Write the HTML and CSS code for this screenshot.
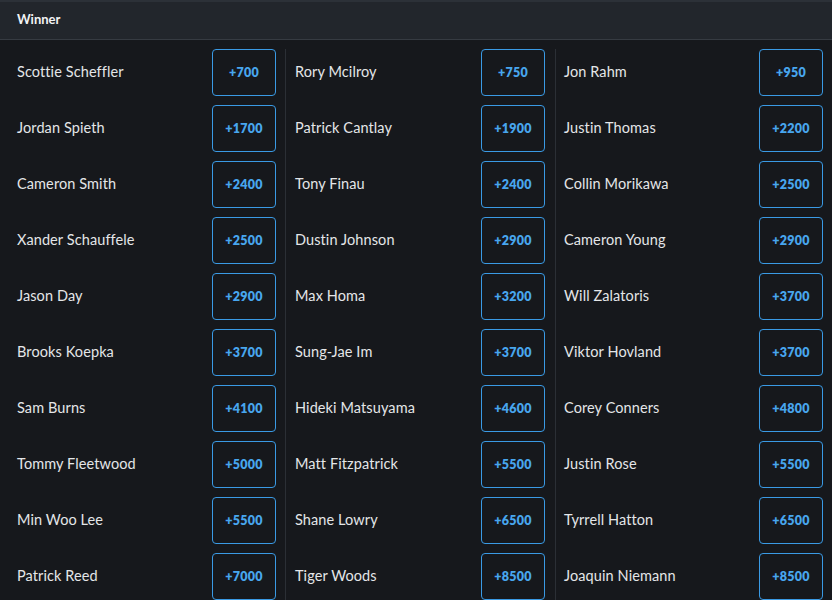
FILE: index.html
```html
<!DOCTYPE html>
<html>
<head>
<meta charset="utf-8">
<link rel="stylesheet" href="styles.css">
</head>
<body>
<div class="market">
  <div class="market-header">Winner</div>
  <div class="grid">
    <div class="col col-1">
      <div class="row"><span class="name">Scottie Scheffler</span><button class="odds">+700</button></div>
      <div class="row"><span class="name">Jordan Spieth</span><button class="odds">+1700</button></div>
      <div class="row"><span class="name">Cameron Smith</span><button class="odds">+2400</button></div>
      <div class="row"><span class="name">Xander Schauffele</span><button class="odds">+2500</button></div>
      <div class="row"><span class="name">Jason Day</span><button class="odds">+2900</button></div>
      <div class="row"><span class="name">Brooks Koepka</span><button class="odds">+3700</button></div>
      <div class="row"><span class="name">Sam Burns</span><button class="odds">+4100</button></div>
      <div class="row"><span class="name">Tommy Fleetwood</span><button class="odds">+5000</button></div>
      <div class="row"><span class="name">Min Woo Lee</span><button class="odds">+5500</button></div>
      <div class="row"><span class="name">Patrick Reed</span><button class="odds">+7000</button></div>
    </div>
    <div class="col col-2">
      <div class="row"><span class="name">Rory Mcilroy</span><button class="odds">+750</button></div>
      <div class="row"><span class="name">Patrick Cantlay</span><button class="odds">+1900</button></div>
      <div class="row"><span class="name">Tony Finau</span><button class="odds">+2400</button></div>
      <div class="row"><span class="name">Dustin Johnson</span><button class="odds">+2900</button></div>
      <div class="row"><span class="name">Max Homa</span><button class="odds">+3200</button></div>
      <div class="row"><span class="name">Sung-Jae Im</span><button class="odds">+3700</button></div>
      <div class="row"><span class="name">Hideki Matsuyama</span><button class="odds">+4600</button></div>
      <div class="row"><span class="name">Matt Fitzpatrick</span><button class="odds">+5500</button></div>
      <div class="row"><span class="name">Shane Lowry</span><button class="odds">+6500</button></div>
      <div class="row"><span class="name">Tiger Woods</span><button class="odds">+8500</button></div>
    </div>
    <div class="col col-3">
      <div class="row"><span class="name">Jon Rahm</span><button class="odds">+950</button></div>
      <div class="row"><span class="name">Justin Thomas</span><button class="odds">+2200</button></div>
      <div class="row"><span class="name">Collin Morikawa</span><button class="odds">+2500</button></div>
      <div class="row"><span class="name">Cameron Young</span><button class="odds">+2900</button></div>
      <div class="row"><span class="name">Will Zalatoris</span><button class="odds">+3700</button></div>
      <div class="row"><span class="name">Viktor Hovland</span><button class="odds">+3700</button></div>
      <div class="row"><span class="name">Corey Conners</span><button class="odds">+4800</button></div>
      <div class="row"><span class="name">Justin Rose</span><button class="odds">+5500</button></div>
      <div class="row"><span class="name">Tyrrell Hatton</span><button class="odds">+6500</button></div>
      <div class="row"><span class="name">Joaquin Niemann</span><button class="odds">+8500</button></div>
    </div>
  </div>
</div>
</body>
</html>
```

FILE: styles.css
```css
html, body {
  margin: 0;
  padding: 0;
  background: #16181c;
  height: 100%;
  overflow: hidden;
}
body {
  font-family: "Lato", "Inter", sans-serif;
  color: #e4e6e8;
}
.market {
  width: 832px;
}
.market-header {
  height: 34px;
  border-top: 2px solid #2c3138;
  border-bottom: 1px solid #363b42;
  background: #22262c;
  padding: 0 0 3px 17px;
  display: flex;
  align-items: center;
  font-size: 13px;
  font-weight: 700;
  color: #f2f3f5;
}
.grid {
  display: grid;
  grid-template-columns: 285px 270px 277px;
  padding-top: 9px;
}
.col {
  display: flex;
  flex-direction: column;
  gap: 9px;
}
.col-1 {
  padding: 0 9px 0 17px;
}
.col-2 {
  border-left: 1px solid #2b2f35;
  padding: 0 10px 0 9px;
}
.col-3 {
  border-left: 1px solid #2b2f35;
  padding: 0 9px 0 8px;
}
.row {
  display: flex;
  align-items: center;
  justify-content: space-between;
  height: 47px;
}
.name {
  font-size: 14.5px;
  line-height: 18px;
  color: #e4e6e8;
  letter-spacing: 0.1px;
  padding-bottom: 2px;
}
.odds {
  width: 64px;
  height: 47px;
  box-sizing: border-box;
  border: 1px solid #3a9ae4;
  border-radius: 4px;
  background: #16181c;
  color: #48a6ee;
  font-family: "Lato", "Inter", sans-serif;
  font-size: 12.5px;
  font-weight: 800;
  letter-spacing: 0.3px;
  padding: 0 0 1px 0;
}
```
